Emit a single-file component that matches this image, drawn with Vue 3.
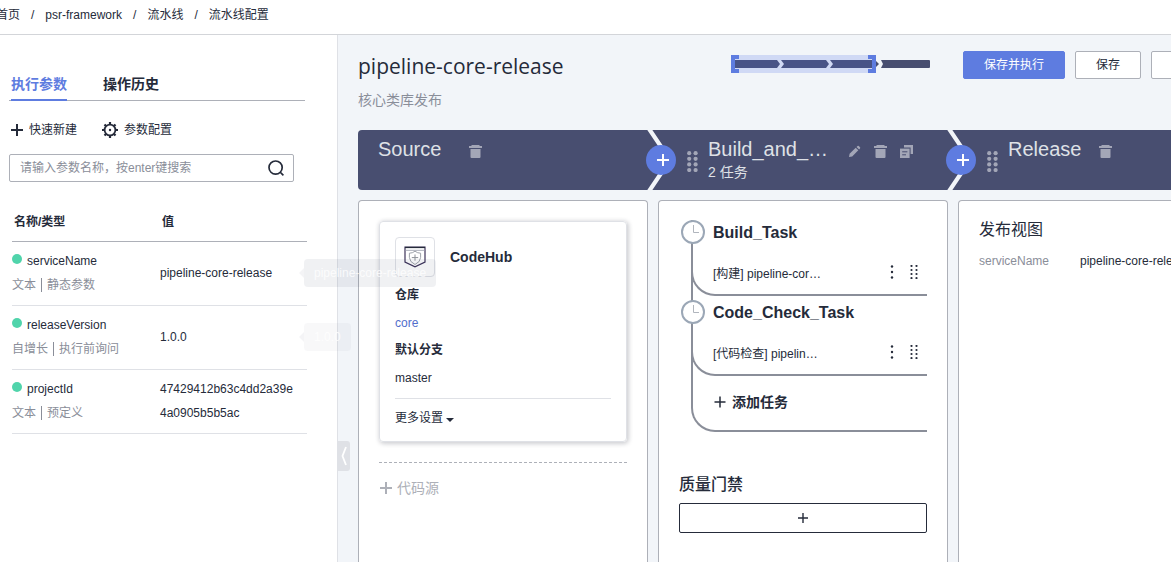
<script setup>
import { ref } from 'vue'

const keyword = ref('')
const params = [
  { name: 'serviceName', kind: '文本', mode: '静态参数', value: 'pipeline-core-release', tip: 'pipeline-core-release' },
  { name: 'releaseVersion', kind: '自增长', mode: '执行前询问', value: '1.0.0', tip: '1.0.0' },
  { name: 'projectId', kind: '文本', mode: '预定义', value: '47429412b63c4dd2a39e4a0905b5b5ac', tip: '' },
]
const stages = [
  { id: 'source', title: 'Source', sub: '', edit: false },
  { id: 'build', title: 'Build_and_…', sub: '2 任务', edit: true },
  { id: 'release', title: 'Release', sub: '', edit: false },
]
const tasks = [
  { title: 'Build_Task', desc: '[构建] pipeline-cor…' },
  { title: 'Code_Check_Task', desc: '[代码检查] pipelin…' },
]
</script>

<template>
  <div class="page">
    <nav class="crumbs" aria-label="breadcrumb">
      <a href="#">首页</a><span>/</span><a href="#">psr-framework</a><span>/</span><a href="#">流水线</a><span>/</span><a href="#">流水线配置</a>
    </nav>

    <div class="body">
      <aside class="side">
        <div class="tabs">
          <button class="tab active">执行参数</button>
          <button class="tab">操作历史</button>
        </div>

        <div class="tools">
          <button>
            <svg width="12" height="12" viewBox="0 0 12 12"><path d="M6 0v12M0 6h12" stroke="#252b3a" stroke-width="2" /></svg>
            快速新建
          </button>
          <button>
            <svg width="16" height="16" viewBox="0 0 16 16" fill="none" stroke="#252b3a">
              <circle cx="8" cy="8" r="5.4" stroke-width="1.8" />
              <path d="M8 0v2.5M8 13.5V16M0 8h2.5M13.5 8H16M2.5 2.5l1.6 1.6M11.9 11.9l1.6 1.6M13.5 2.5l-1.6 1.6M4.1 11.9l-1.6 1.6" stroke-width="2.2" />
              <circle cx="8" cy="8" r="1.2" fill="#252b3a" stroke="none" />
            </svg>
            参数配置
          </button>
        </div>

        <div class="search">
          <input v-model="keyword" type="text" aria-label="搜索参数" placeholder="请输入参数名称，按enter键搜索" />
          <button aria-label="搜索">
            <svg width="16" height="16" viewBox="0 0 16 16" fill="none" stroke="#252b3a" stroke-width="1.7">
              <circle cx="7.6" cy="7.6" r="6.6" /><path d="M12 12l3.4 3.4" />
            </svg>
          </button>
        </div>

        <table class="params">
          <thead>
            <tr><th class="c1">名称/类型</th><th>值</th></tr>
          </thead>
          <tbody>
            <tr v-for="p in params" :key="p.name">
              <td>
                <div class="name"><i class="dot"></i>{{ p.name }}</div>
                <div class="type">{{ p.kind }}<i class="bar"></i>{{ p.mode }}</div>
              </td>
              <td class="value">
                {{ p.value }}
                <span v-if="p.tip" class="tip" :class="{ faint: p.tip === '1.0.0' }">{{ p.tip }}</span>
              </td>
            </tr>
          </tbody>
        </table>

        <button class="fold" aria-label="收起">
          <svg width="6" height="20" viewBox="0 0 6 20"><path d="M5 1L1.5 10L5 19" fill="none" stroke="#fff" stroke-width="1.8" /></svg>
        </button>
      </aside>

      <main class="main">
        <header class="head">
          <div class="heading">
            <h1>pipeline-core-release</h1>
            <p>核心类库发布</p>
          </div>
          <svg class="map" width="199" height="18" viewBox="0 0 199 18">
            <path d="M2 5H46L49 9L46 13H2ZM50 5H95L98 9L95 13H50L53 9ZM99 5H144L148 9L144 13H99L102 9ZM150 5H198Q199 5 199 6V12Q199 13 198 13H150L152 9Z" fill="#484e70" />
            <rect width="145" height="18" fill="#4c69e6" fill-opacity=".2" />
            <path d="M0 0H8V4H4V14H8V18H0ZM145 0H137V4H141V14H137V18H145Z" fill="#5e7ce0" />
          </svg>
          <div class="actions">
            <button class="btn primary">保存并执行</button>
            <button class="btn">保存</button>
            <button class="btn" aria-label="取消"></button>
          </div>
        </header>

        <div class="board">
          <section v-for="(s, i) in stages" :key="s.id" class="stage">
            <div class="bar-head" :class="{ first: i === 0 }">
              <svg v-if="i > 0" class="chevron" width="30" height="60" viewBox="0 0 30 60">
                <path d="M2.5 -2L24 30L2.5 62" fill="none" stroke="#f2f5f9" stroke-width="4.2" />
              </svg>
              <button v-if="i > 0" class="add-stage" aria-label="添加阶段">
                <svg width="12" height="12" viewBox="0 0 12 12"><path d="M6 0v12M0 6h12" stroke="#fff" stroke-width="2" /></svg>
              </button>
              <svg v-if="i > 0" class="grip" width="11" height="21" viewBox="0 0 11 21" fill="#a3a6b7">
                <template v-for="r in 4" :key="r">
                  <circle cx="2.2" :cy="r * 5.6 - 3.4" r="2.1" /><circle cx="8.6" :cy="r * 5.6 - 3.4" r="2.1" />
                </template>
              </svg>
              <div class="label" :class="{ wide: s.edit }">
                <h2>{{ s.title }}</h2>
                <p v-if="s.sub">{{ s.sub }}</p>
              </div>
              <div class="ops">
                <button v-if="s.edit" aria-label="编辑">
                  <svg width="13" height="13" viewBox="0 0 13 13" fill="#a3a6b7"><path d="M1 12L1.6 8.8L7.7 2.7L10.3 5.3L4.2 11.4ZM8.5 1.9L9.6 .9Q10.2 .5 10.8 1L12 2.2Q12.5 2.8 12 3.4L11.1 4.5Z" /></svg>
                </button>
                <button aria-label="删除">
                  <svg width="13" height="13" viewBox="0 0 13 13" fill="#a3a6b7"><path d="M3 0H10L11 1H13V3H0V1H2ZM1.5 4H11.5V12Q11.5 13 10.5 13H2.5Q1.5 13 1.5 12Z" /></svg>
                </button>
                <button v-if="s.edit" aria-label="复制">
                  <svg width="13" height="13" viewBox="0 0 13 13"><path d="M4 0H13V9H10.6V2.6H4Z" fill="#a3a6b7" /><path d="M0 3.6H9.6V13H0Z" fill="#a3a6b7" /><path d="M2.2 6.8H7.4M2.2 9.8H6" stroke="#484e70" stroke-width="1" /></svg>
                </button>
              </div>
            </div>

            <div v-if="s.id === 'source'" class="card">
              <article class="repo">
                <div class="repo-top">
                  <span class="logo">
                    <svg width="22" height="22" viewBox="0 0 22 22" fill="none">
                      <path d="M1 1H21V16L11 20.8L1 16Z" stroke="#3c3259" stroke-width="1.2" />
                      <path d="M1 1.5H21" stroke="#252b3a" stroke-width="1.2" /><path d="M1.6 4.3H20.4" stroke="#a9adb8" />
                      <path d="M11 5.2Q13.5 7.2 16.6 7.2V11.5Q16.4 16 11 18.5Q5.6 16 5.4 11.5V7.2Q8.5 7.2 11 5.2Z" stroke="#92969f" stroke-width=".9" />
                      <path d="M11 8.5V14.7M7.8 11.6H14.2" stroke="#8d9098" />
                    </svg>
                  </span>
                  <h3>CodeHub</h3>
                </div>
                <dl>
                  <dt>仓库</dt>
                  <dd><a href="#">core</a></dd>
                  <dt>默认分支</dt>
                  <dd>master</dd>
                </dl>
                <button class="more">更多设置<i class="caret"></i></button>
              </article>
              <div class="add-source">
                <button>
                  <svg width="12" height="12" viewBox="0 0 12 12"><path d="M6 0v12M0 6h12" stroke="#adb0b8" stroke-width="2" /></svg>
                  代码源
                </button>
              </div>
            </div>

            <div v-else-if="s.id === 'build'" class="card tasks-card">
              <div class="tree">
                <div v-for="t in tasks" :key="t.title" class="task">
                  <svg class="clock" width="24" height="24" viewBox="0 0 24 24">
                    <circle cx="12" cy="12" r="11" fill="#fff" stroke="#9ba7b6" stroke-width="2" />
                    <path d="M12.5 5V12.5H18" fill="none" stroke="#b0b5bd" />
                  </svg>
                  <h3>{{ t.title }}</h3>
                  <div class="row">
                    <span>{{ t.desc }}</span>
                    <button aria-label="更多">
                      <svg width="4" height="14" viewBox="0 0 4 14" fill="#252b3a"><circle cx="2" cy="1.5" r="1.2" /><circle cx="2" cy="7" r="1.2" /><circle cx="2" cy="12.5" r="1.2" /></svg>
                    </button>
                    <button aria-label="拖动">
                      <svg width="8" height="14" viewBox="0 0 8 14" fill="#252b3a">
                        <template v-for="r in 4" :key="r">
                          <circle cx="1.5" :cy="r * 4 - 3" r="1.1" /><circle cx="6.5" :cy="r * 4 - 3" r="1.1" />
                        </template>
                      </svg>
                    </button>
                  </div>
                </div>
                <button class="add-task">
                  <svg width="12" height="12" viewBox="0 0 12 12"><path d="M6 .5v11M.5 6h11" stroke="#252b3a" stroke-width="1.5" /></svg>
                  添加任务
                </button>
              </div>
              <h4>质量门禁</h4>
              <button class="gate" aria-label="添加门禁">
                <svg width="10" height="10" viewBox="0 0 10 10"><path d="M5 0v10M0 5h10" stroke="#252b3a" stroke-width="1.4" /></svg>
              </button>
            </div>

            <div v-else class="card">
              <h4 class="view">发布视图</h4>
              <div class="pair"><span>serviceName</span><b>pipeline-core-release</b></div>
            </div>
          </section>
        </div>
      </main>
    </div>
  </div>
</template>

<style>
body {
  overflow: hidden;
}
</style>

<style scoped>
* {
  box-sizing: border-box;
}
.page {
  display: flex;
  flex-direction: column;
  height: 100vh;
  overflow: hidden;
  background: #fff;
  color: #252b3a;
  font: 12px/18px "Liberation Sans", "Noto Sans CJK SC", sans-serif;
}
h1, h2, h3, h4, p, dl, dd {
  margin: 0;
}
button {
  padding: 0;
  border: 0;
  background: none;
  color: inherit;
  font: inherit;
  white-space: nowrap;
  cursor: pointer;
}
a {
  color: inherit;
  text-decoration: none;
}
svg {
  display: block;
  flex: none;
}
.crumbs {
  display: flex;
  flex: none;
  align-items: center;
  gap: 11px;
  height: 35px;
  margin-left: -4px;
  padding-bottom: 5px;
  border-bottom: 1px solid #d3d5d9;
}
.body {
  display: flex;
  flex: 1;
  min-height: 0;
}
.side {
  position: relative;
  z-index: 2;
  flex: none;
  width: 338px;
  padding: 38px 30px 0 9px;
  border-right: 1px solid #dfe1e6;
}
.tabs {
  display: flex;
  gap: 36px;
  width: 296px;
  padding-left: 2px;
  border-bottom: 1px solid #adb0b8;
}
.tab {
  height: 28px;
  margin-bottom: -1px;
  padding-bottom: 4px;
  border-bottom: 2px solid transparent;
  font-size: 14px;
  font-weight: 700;
  line-height: 20px;
}
.tab.active {
  border-color: #5e7ce0;
  color: #5e7ce0;
}
.tools {
  display: flex;
  gap: 25px;
  margin: 19px 0 14px 2px;
}
.tools button {
  display: flex;
  align-items: center;
  gap: 6px;
  height: 20px;
}
.search {
  display: flex;
  align-items: center;
  width: 285px;
  height: 28px;
  padding: 0 9px 0 10px;
  border: 1px solid #adb0b8;
  border-radius: 2px;
}
.search input {
  flex: 1;
  min-width: 0;
  padding: 0;
  border: 0;
  outline: 0;
  background: none;
  font: inherit;
}
.search input::placeholder {
  color: #8a8e99;
  opacity: 1;
}
.params {
  width: 295px;
  margin: 22px 0 0 3px;
  border-collapse: collapse;
  table-layout: fixed;
}
.params th {
  height: 37px;
  padding: 0 2px;
  border-bottom: 1px solid #adb0b8;
  text-align: left;
}
.params .c1 {
  width: 148px;
}
.params td {
  height: 64px;
  padding: 7px 0 8px;
  border-bottom: 1px solid #dfe1e6;
  line-height: 24px;
}
.params .value {
  position: relative;
  padding-right: 10px;
  word-break: break-all;
}
.name {
  display: flex;
  gap: 5px;
}
.dot {
  width: 10px;
  height: 10px;
  margin-top: 5px;
  border-radius: 50%;
  background: #50d4ab;
}
.type {
  display: flex;
  align-items: center;
  color: #8a8e99;
}
.bar {
  width: 1px;
  height: 14px;
  margin: 0 5px;
  background: #8a8e99;
}
.tip {
  position: absolute;
  top: 17px;
  left: 144px;
  padding: 2px 10px;
  border-radius: 4px;
  background: rgba(70, 76, 100, 0.08);
  color: rgba(255, 255, 255, 0.8);
  white-space: nowrap;
}
.tip.faint {
  background: rgba(70, 76, 100, 0.04);
}
.tip::before {
  position: absolute;
  top: 9px;
  right: 100%;
  border: 5px solid transparent;
  border-left: 0;
  border-right-color: rgba(70, 76, 100, 0.06);
  content: "";
}
.fold {
  position: absolute;
  top: 406px;
  left: 100%;
  display: flex;
  align-items: center;
  justify-content: center;
  width: 13px;
  height: 30px;
  border-radius: 0 3px 3px 0;
  background: #dfe1e6;
}
.main {
  display: flex;
  flex: 1;
  flex-direction: column;
  min-width: 0;
  padding: 16px 0 0 20px;
  overflow: hidden;
  background: #f2f5f9;
}
.head {
  display: flex;
  flex: none;
  align-items: flex-start;
  height: 79px;
}
.heading {
  flex: 0 0 373px;
}
.heading h1 {
  font: 400 21px/30px "Open Sans", "Noto Sans CJK SC", sans-serif;
}
.heading p {
  margin-top: 9px;
  color: #8a8e99;
  font-size: 14px;
  line-height: 20px;
}
.map {
  margin-top: 4px;
}
.actions {
  display: flex;
  gap: 10px;
  margin-left: 33px;
}
.btn {
  flex: none;
  min-width: 66px;
  height: 28px;
  padding: 0 20px;
  border: 1px solid #adb0b8;
  border-radius: 2px;
  background: #fff;
}
.btn.primary {
  border-color: #5e7ce0;
  background: #5e7ce0;
  color: #fff;
}
.board {
  display: flex;
  flex: 1;
  min-height: 0;
}
.stage {
  display: flex;
  flex: 0 0 300px;
  flex-direction: column;
}
.bar-head {
  position: relative;
  display: flex;
  flex: none;
  height: 60px;
  background: #484e70;
  color: #dfe1e6;
}
.bar-head.first {
  padding-left: 20px;
  border-radius: 4px 0 0 4px;
}
.chevron {
  position: absolute;
  top: 0;
  left: -12px;
}
.add-stage {
  position: absolute;
  top: 15px;
  left: -12px;
  display: flex;
  align-items: center;
  justify-content: center;
  width: 30px;
  height: 30px;
  padding-left: 3px;
  border-radius: 50%;
  background: #5e7ce0;
}
.grip {
  margin: 21px 10px 0 29px;
}
.label {
  padding-top: 7px;
}
.label.wide {
  width: 120px;
}
.label h2 {
  font-size: 20px;
  font-weight: 400;
  line-height: 24px;
}
.label p {
  font-size: 14px;
  line-height: 22px;
}
.ops {
  display: flex;
  gap: 13px;
  height: 13px;
  margin: 15px 0 0 18px;
}
.first .ops {
  margin-left: 28px;
}
.wide + .ops {
  margin-left: 20px;
}
.card {
  flex: 1;
  width: 290px;
  margin-top: 10px;
  padding: 20px;
  border: 1px solid #adb0b8;
  border-bottom: 0;
  border-radius: 4px 4px 0 0;
  background: #fff;
}
.repo {
  padding: 15px 15px 8px;
  border: 1px solid #dfe1e6;
  border-radius: 4px;
  box-shadow: 1px 1px 4px 1px rgba(37, 43, 58, 0.22);
}
.repo-top {
  display: flex;
  align-items: center;
  gap: 15px;
}
.logo {
  display: grid;
  place-items: center;
  width: 40px;
  height: 40px;
  border: 1px solid #dfe1e6;
  border-radius: 4px;
}
.repo h3 {
  font-size: 14px;
  line-height: 20px;
}
.repo dl {
  padding: 5px 0 6px;
  border-bottom: 1px solid #dfe1e6;
  line-height: 28px;
}
.repo dt {
  font-weight: 700;
  line-height: 27px;
}
.repo dd a {
  color: #526ecc;
}
.more {
  display: flex;
  align-items: center;
  height: 30px;
  margin-top: 4px;
}
.caret {
  margin: 3px 0 0 3px;
  border: 4px solid transparent;
  border-top-color: #252b3a;
  border-bottom: 0;
}
.add-source {
  margin-top: 20px;
  padding-top: 15px;
  border-top: 1px dashed #adb0b8;
}
.add-source button {
  display: flex;
  align-items: center;
  gap: 5px;
  padding-left: 1px;
  color: #adb0b8;
  font-size: 14px;
  line-height: 20px;
}
.tasks-card {
  padding-top: 19px;
}
.tree {
  margin-left: 12px;
  border: solid #8a8e99;
  border-width: 0 0 2px 2px;
  border-bottom-left-radius: 24px;
}
.task {
  position: relative;
  height: 76px;
  margin: 0 0 4px -2px;
  padding: 1px 0 0 20px;
  border: solid #8a8e99;
  border-width: 0 0 2px 2px;
  border-bottom-left-radius: 24px;
}
.clock {
  position: absolute;
  top: 0;
  left: -12px;
}
.task h3 {
  font-size: 16px;
  line-height: 24px;
}
.row {
  display: flex;
  align-items: flex-start;
  gap: 16px;
  margin-top: 20px;
  padding-right: 9px;
}
.row span {
  flex: 1;
}
.add-task {
  display: flex;
  align-items: center;
  gap: 6px;
  margin: 16px 0 18px 21px;
  font-size: 14px;
  font-weight: 700;
  line-height: 20px;
}
h4 {
  font-size: 16px;
  font-weight: 500;
  line-height: 24px;
}
.tasks-card h4 {
  margin: 41px 0 6px;
}
.gate {
  display: flex;
  align-items: center;
  justify-content: center;
  width: 100%;
  height: 30px;
  border: 1px solid #252b3a;
  border-radius: 2px;
}
.view {
  margin-top: -3px;
  font-weight: 400;
}
.pair {
  display: flex;
  margin-top: 10px;
  white-space: nowrap;
}
.pair span {
  flex: 0 0 101px;
  color: #8a8e99;
}
.pair b {
  font-weight: 400;
}
</style>
